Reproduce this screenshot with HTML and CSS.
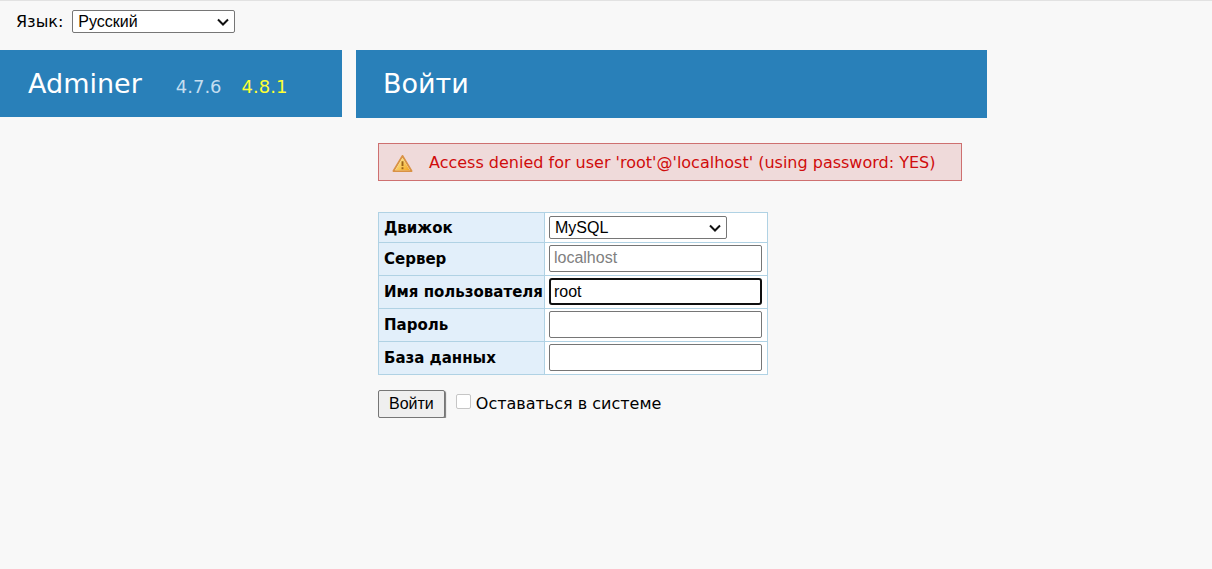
FILE: index.html
```html
<!DOCTYPE html>
<html lang="ru">
<head>
<meta charset="utf-8">
<meta name="viewport" content="width=device-width, initial-scale=1">
<title>Войти - Adminer</title>
<link rel="stylesheet" href="styles.css">
</head>
<body>
<form class="lang">
  <label for="lang">Язык:</label>
  <span class="select lang-select">
    <select id="lang"><option>Русский</option><option>English</option></select>
    <svg class="chevron" viewBox="0 0 12 8" aria-hidden="true"><path d="M1 1.5l5 5 5-5"/></svg>
  </span>
</form>
<div class="page">
  <header class="menu">
    <h1 class="bar brand">
      <a class="name" href="#">Adminer</a>
      <span class="version">4.7.6</span>
      <a class="latest" href="#">4.8.1</a>
    </h1>
  </header>
  <main class="content">
    <h2 class="bar title">Войти</h2>
    <form class="login">
      <div class="error" role="alert">
        <svg class="warning" viewBox="0 0 22 20" aria-hidden="true">
          <defs>
            <linearGradient id="amber" x1="0" y1="0" x2="1" y2="1">
              <stop offset="0" stop-color="#fff3a5"/>
              <stop offset="1" stop-color="#f3a51e"/>
            </linearGradient>
          </defs>
          <path d="M11 2L20.500 18H1.500Z" fill="#fff0cd" stroke="#d99245" stroke-width="2" stroke-linejoin="round"/>
          <path d="M11 4L18.500 17H3.500Z" fill="url(#amber)"/>
          <path d="M11 7.500V12.500M11 14V16" stroke="#9c6418" stroke-width="2"/>
        </svg>
        <span>Access denied for user 'root'@'localhost' (using password: YES)</span>
      </div>
      <table class="fields">
        <tr>
          <th scope="row"><label for="driver">Движок</label></th>
          <td>
            <span class="select driver-select">
              <select id="driver"><option>MySQL</option><option>SQLite 3</option><option>PostgreSQL</option></select>
              <svg class="chevron" viewBox="0 0 12 8" aria-hidden="true"><path d="M1 1.5l5 5 5-5"/></svg>
            </span>
          </td>
        </tr>
        <tr>
          <th scope="row"><label for="server">Сервер</label></th>
          <td class="entry"><input class="text" id="server" type="text" placeholder="localhost"></td>
        </tr>
        <tr>
          <th scope="row"><label for="username">Имя пользователя</label></th>
          <td class="entry"><input class="text current" id="username" type="text" value="root"></td>
        </tr>
        <tr>
          <th scope="row"><label for="password">Пароль</label></th>
          <td class="entry"><input class="text" id="password" type="password"></td>
        </tr>
        <tr>
          <th scope="row"><label for="db">База данных</label></th>
          <td class="entry"><input class="text" id="db" type="text"></td>
        </tr>
      </table>
      <div class="actions">
        <button class="submit" type="submit">Войти</button>
        <input class="check" id="permanent" type="checkbox">
        <label for="permanent">Оставаться в системе</label>
      </div>
    </form>
  </main>
</div>
</body>
</html>
```
FILE: styles.css
```css
* {
  box-sizing: border-box;
}

body {
  margin: 0;
  border-top: 1px solid #e2e2e2;
  background: #f8f8f8;
  color: #000;
  font: 16px/20px Verdana, "DejaVu Sans", sans-serif;
}

.lang {
  display: flex;
  align-items: center;
  gap: 9px;
  padding: 9px 16px 17px;
}

.select {
  display: inline-grid;
  align-items: center;
  vertical-align: top;
}

.select select,
.chevron {
  grid-area: 1 / 1;
}

.select select {
  width: 100%;
  height: 23px;
  padding: 0 20px 0 5px;
  border: 1px solid #767676;
  border-radius: 2px;
  background: #fff;
  color: #000;
  font: 16px/20px Arial, "Liberation Sans", sans-serif;
  appearance: none;
}

.chevron {
  justify-self: end;
  width: 12px;
  height: 8px;
  margin-right: 6px;
  fill: none;
  stroke: #111;
  stroke-width: 2;
  pointer-events: none;
}

.lang-select {
  width: 163px;
}

.driver-select {
  width: 178px;
}

.page {
  display: flex;
  align-items: flex-start;
  gap: 14px;
}

.menu {
  flex: 0 1 342px;
}

.bar {
  margin: 0;
  background: #2980b9;
  color: #fff;
  font-size: 27px;
  line-height: 36px;
  font-weight: 400;
}

.brand {
  display: flex;
  align-items: baseline;
  padding: 16px 28px 12px;
}

.brand a {
  text-decoration: none;
}

.name {
  margin-right: 34px;
  color: #fff;
}

.version,
.latest {
  font-size: 18px;
}

.version {
  margin-right: 20px;
  color: #c4def0;
}

.latest {
  color: #ff3;
}

.title {
  padding: 16px 27px;
}

.content {
  width: fit-content;
}

.login {
  padding: 25px 25px 0 22px;
}

.error {
  display: flex;
  align-items: center;
  gap: 16px;
  padding: 9px 26px 7px 13px;
  border: 1px solid #ce7070;
  background: #efdada;
  color: #d00c0c;
}

.warning {
  width: 21px;
  height: 19px;
}

.fields {
  margin-top: 31px;
  border-collapse: collapse;
  background: #fff;
}

.fields th,
.fields td {
  border: 1px solid #b0d2e4;
}

.fields th {
  padding: 0 1px 0 5px;
  background: #e2effa;
  font-size: 15px;
  font-weight: 700;
  text-align: left;
}

.fields td {
  padding: 3px 5px 3px 4px;
}

.fields .entry {
  padding-top: 2px;
}

.text {
  display: block;
  width: 213px;
  height: 27px;
  padding: 1px 4px 3px;
  border: 1px solid #767676;
  border-radius: 2px;
  background: #fff;
  color: #000;
  font: 16px/20px Arial, "Liberation Sans", sans-serif;
}

.text::placeholder {
  color: #808080;
}

.current {
  padding: 0 3px;
  border: 2px solid #101010;
  border-radius: 3px;
}

.actions {
  display: flex;
  align-items: center;
  margin-top: 15px;
}

.submit {
  height: 28px;
  margin-right: 11px;
  padding: 0 10px;
  border: 1px solid #767676;
  border-radius: 2px;
  background: #efefef;
  box-shadow: 1px 1px 1px #777;
  color: #000;
  font: 16px/20px Arial, "Liberation Sans", sans-serif;
}

.check {
  width: 15px;
  height: 15px;
  margin: 0 5px 6px 0;
  border: 1px solid #c6c6c6;
  border-radius: 2px;
  background: #fff;
  appearance: none;
}

.check:checked {
  background: #2980b9;
}
```
